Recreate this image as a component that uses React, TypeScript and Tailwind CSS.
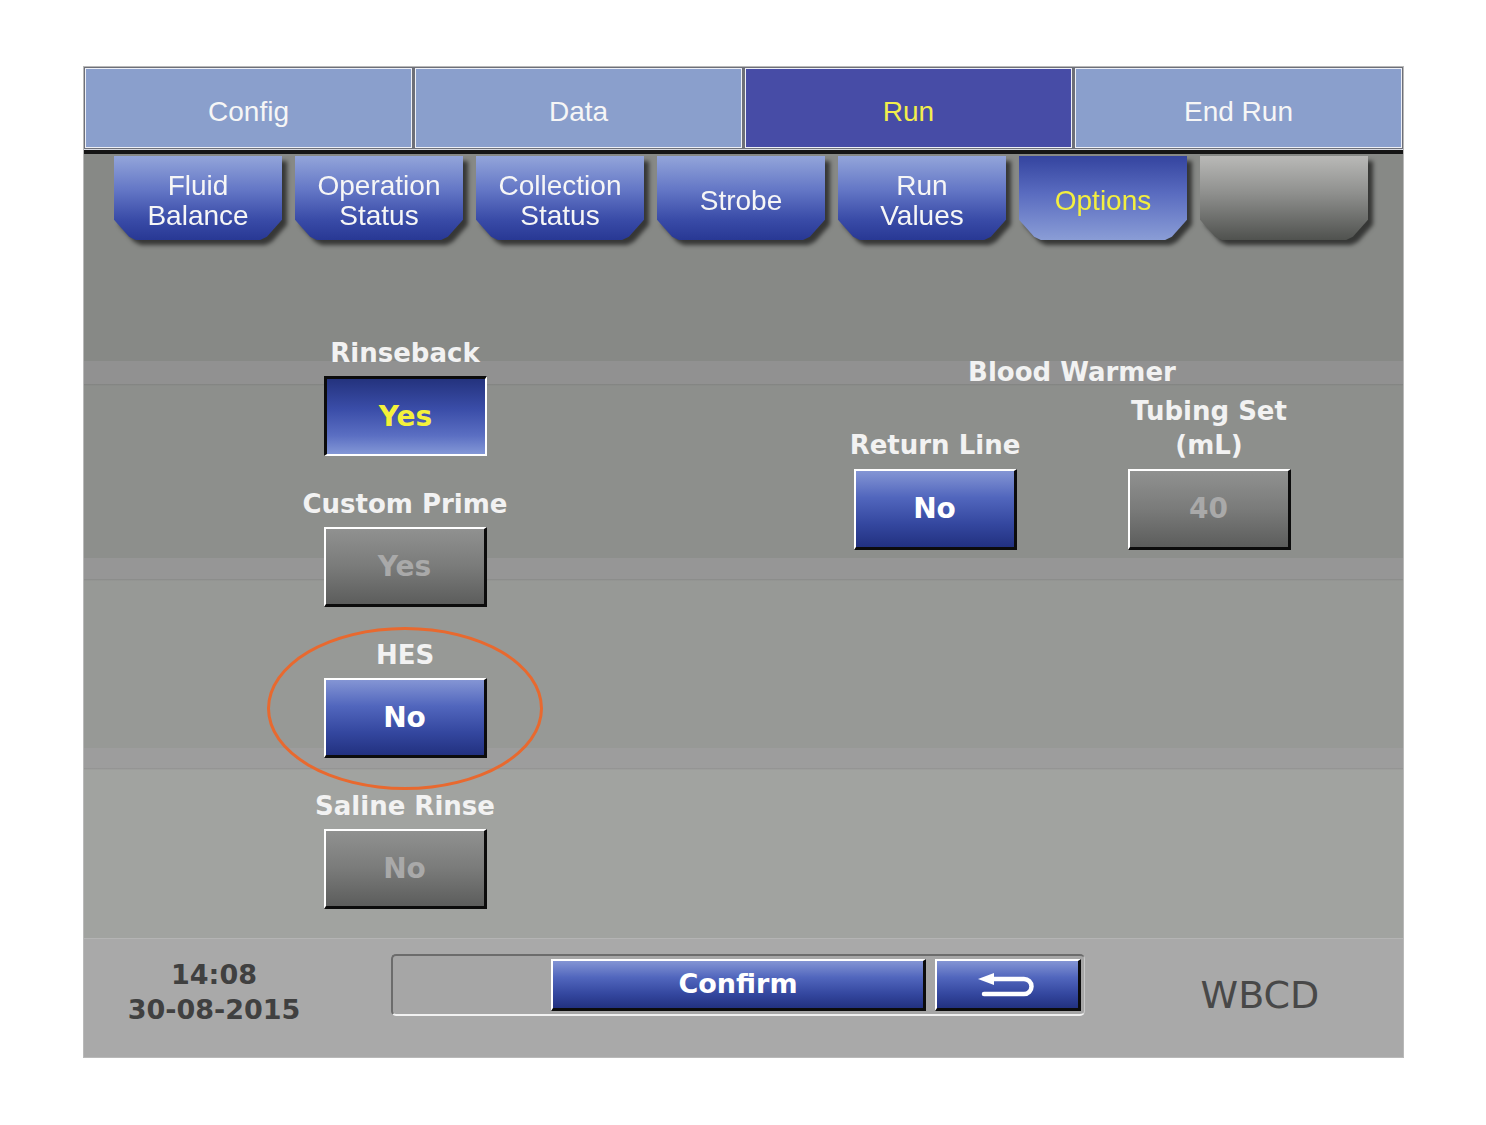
import React from 'react';

// Touch-panel style "Options" screen of the run menu

const mainTabs = [
  { label: 'Config' },
  { label: 'Data' },
  { label: 'Run', active: true },
  { label: 'End Run' },
];

type SubTab = { lines: string[]; kind: 'normal' | 'active' | 'blank' };

const subTabs: SubTab[] = [
  { lines: ['Fluid', 'Balance'], kind: 'normal' },
  { lines: ['Operation', 'Status'], kind: 'normal' },
  { lines: ['Collection', 'Status'], kind: 'normal' },
  { lines: ['Strobe'], kind: 'normal' },
  { lines: ['Run', 'Values'], kind: 'normal' },
  { lines: ['Options'], kind: 'active' },
  { lines: [], kind: 'blank' },
];

const subTabFill: Record<SubTab['kind'], string> = {
  normal: 'bg-[linear-gradient(to_bottom,#93a5da_0%,#6477c6_40%,#3a4ca8_75%,#283894_100%)] text-[#f6f6f6]',
  active: 'bg-[linear-gradient(to_bottom,#34449f_0%,#5a6cc0_45%,#8a9dd6_100%)] text-[#f3ef3f]',
  blank: 'bg-[linear-gradient(to_bottom,#b9b9b7_0%,#8e8f8d_45%,#50524f_100%)]',
};

type ButtonKind = 'raised' | 'pressed' | 'disabled';

const buttonStyle: Record<ButtonKind, string> = {
  raised:
    'bg-[linear-gradient(to_bottom,#8495d4_0%,#5166bd_35%,#34479f_70%,#223180_100%)] border-t-2 border-l-2 border-b-[3px] border-r-[3px] border-t-white border-l-white border-b-[#0c0c0c] border-r-[#0c0c0c] text-white',
  pressed:
    'bg-[linear-gradient(to_bottom,#24337e_0%,#3a4da8_40%,#5a6ec2_75%,#8397d6_100%)] border-t-[3px] border-l-[3px] border-b-2 border-r-2 border-t-[#0c0c0c] border-l-[#0c0c0c] border-b-white border-r-white text-[#f4f23a]',
  disabled:
    'bg-[linear-gradient(to_bottom,#909190_0%,#7a7b7a_50%,#5c5d5c_100%)] border-t-2 border-l-2 border-b-[3px] border-r-[3px] border-t-white border-l-white border-b-[#0c0c0c] border-r-[#0c0c0c] text-[#a9a9a9]',
};

function PanelButton({ kind, children, className = '' }: { kind: ButtonKind; children: React.ReactNode; className?: string }) {
  return (
    <button
      type="button"
      className={`flex items-center justify-center font-['DejaVu_Sans',sans-serif] font-bold ${buttonStyle[kind]} ${className}`}
    >
      {children}
    </button>
  );
}

function Label({ children }: { children: React.ReactNode }) {
  return (
    <div className="h-[36px] leading-[36px] text-center text-[26px] font-bold text-[#f2f2f2] font-['DejaVu_Sans',sans-serif] whitespace-nowrap">
      {children}
    </div>
  );
}

function OptionGroup({ label, kind, value, circled }: { label: string; kind: ButtonKind; value: string; circled?: boolean }) {
  return (
    <div className="relative flex flex-col items-center w-[260px]">
      <Label>{label}</Label>
      <PanelButton kind={kind} className="mt-[5px] w-[163px] h-[80px] text-[28px]">
        {value}
      </PanelButton>
      {circled && (
        <div className="absolute left-[-8px] top-[-10px] w-[276px] h-[163px] rounded-[50%] border-[3px] border-[#e8692f] pointer-events-none" />
      )}
    </div>
  );
}

function BackIcon() {
  return (
    <svg width="60" height="24" viewBox="0 0 60 24" fill="none">
      <polygon points="0,6 16,0 16,12" fill="white" />
      <path d="M14 6 H46 A7.5 7.5 0 0 1 46 21 H6" stroke="white" strokeWidth="4.5" strokeLinecap="round" fill="none" />
    </svg>
  );
}

export default function App() {
  return (
    <div className="min-h-screen bg-white pt-[66px] pl-[83px]">
      <div className="w-[1321px] h-[992px] flex flex-col border border-[#b9b9b9] bg-[#878986]">
        {/* main tabs */}
        <div className="flex gap-[3px] p-[1px] h-[82px] bg-[#6d6f78] font-['Liberation_Sans',Arial,sans-serif]">
          {mainTabs.map((t) => (
            <div
              key={t.label}
              className={`flex-1 flex items-center justify-center pt-[8px] text-[28px] border border-[#eef0f6] ${
                t.active ? 'bg-[#474ca6] text-[#f2ee4c] border-[#2a2a6a]' : 'bg-[#8a9fcc] text-[#f6f6f6]'
              }`}
            >
              {t.label}
            </div>
          ))}
        </div>
        <div className="h-[1px] bg-[#d8dbe4]" />
        <div className="h-[4px] bg-[#151515]" />

        {/* body with banded background */}
        <div className="flex-1 flex flex-col bg-[linear-gradient(to_bottom,#878986_0,#878986_207px,#919191_207px,#919191_230px,#818281_230px,#8d8f8c_232px,#8d8f8c_404px,#969696_404px,#969696_425px,#888988_425px,#979996_427px,#979996_594px,#9d9d9d_594px,#9d9d9d_614px,#909090_614px,#a1a3a0_616px,#a1a3a0_100%)]">
          {/* sub tabs */}
          <div className="flex gap-[13px] pl-[30px] pt-[2px] h-[92px] font-['Liberation_Sans',Arial,sans-serif]">
            {subTabs.map((s, i) => (
              <div key={i} className="[filter:drop-shadow(5px_5px_2px_rgba(0,0,0,0.6))]">
                <div
                  className={`w-[168px] h-[84px] pt-[6px] flex flex-col items-center justify-center text-[28px] leading-[30px] [clip-path:polygon(0_0,100%_0,100%_76%,91%_96%,87%_100%,13%_100%,9%_96%,0_76%)] ${subTabFill[s.kind]}`}
                >
                  {s.lines.map((l) => (
                    <span key={l}>{l}</span>
                  ))}
                </div>
              </div>
            ))}
          </div>

          {/* option settings */}
          <div className="flex pl-[191px]">
            <div className="flex flex-col gap-[30px] pt-[89px]">
              <OptionGroup label="Rinseback" kind="pressed" value="Yes" />
              <OptionGroup label="Custom Prime" kind="disabled" value="Yes" />
              <OptionGroup label="HES" kind="raised" value="No" circled />
              <OptionGroup label="Saline Rinse" kind="disabled" value="No" />
            </div>

            <div className="ml-[270px] pt-[109px] flex flex-col">
              <div className="h-[34px] leading-[34px] text-center text-[26px] font-bold text-[#f2f2f2] font-['DejaVu_Sans',sans-serif]">
                Blood Warmer
              </div>
              <div className="mt-[5px] flex items-end gap-[14px]">
                <div className="w-[260px] flex flex-col items-center">
                  <div className="h-[34px] leading-[34px] text-[26px] font-bold text-[#f2f2f2] font-['DejaVu_Sans',sans-serif]">
                    Return Line
                  </div>
                  <PanelButton kind="raised" className="mt-[7px] w-[163px] h-[81px] text-[28px]">
                    No
                  </PanelButton>
                </div>
                <div className="w-[260px] flex flex-col items-center">
                  <div className="text-center leading-[34px] text-[26px] font-bold text-[#f2f2f2] font-['DejaVu_Sans',sans-serif]">
                    <div>Tubing Set</div>
                    <div>(mL)</div>
                  </div>
                  <PanelButton kind="disabled" className="mt-[7px] w-[163px] h-[81px] text-[28px]">
                    40
                  </PanelButton>
                </div>
              </div>
            </div>
          </div>
        </div>

        {/* footer */}
        <div className="h-[119px] flex items-start bg-[#a9a9a9] border-t border-[#b4b4b4]">
          <div className="ml-[10px] mt-[18px] w-[240px] text-center text-[27px] leading-[35px] font-bold text-[#404040] font-['DejaVu_Sans',sans-serif]">
            <div>14:08</div>
            <div>30-08-2015</div>
          </div>

          <div className="ml-[57px] mt-[15px] w-[694px] h-[62px] flex justify-end gap-[9px] rounded-[5px] border-t-2 border-l-2 border-b-2 border-r border-t-[#6c6c6c] border-l-[#6c6c6c] border-b-[#f2f2f2] border-r-[#c8c8c8] bg-[#a6a6a6] py-[3px] pr-[3px]">
            <PanelButton kind="raised" className="w-[375px] h-[52px] text-[27px]">
              Confirm
            </PanelButton>
            <PanelButton kind="raised" className="w-[146px] h-[52px]">
              <BackIcon />
            </PanelButton>
          </div>

          <div className="ml-[75px] mt-[33px] w-[200px] text-center text-[38px] leading-[46px] text-[#484848] font-['DejaVu_Sans',sans-serif]">
            WBCD
          </div>
        </div>
      </div>
    </div>
  );
}
